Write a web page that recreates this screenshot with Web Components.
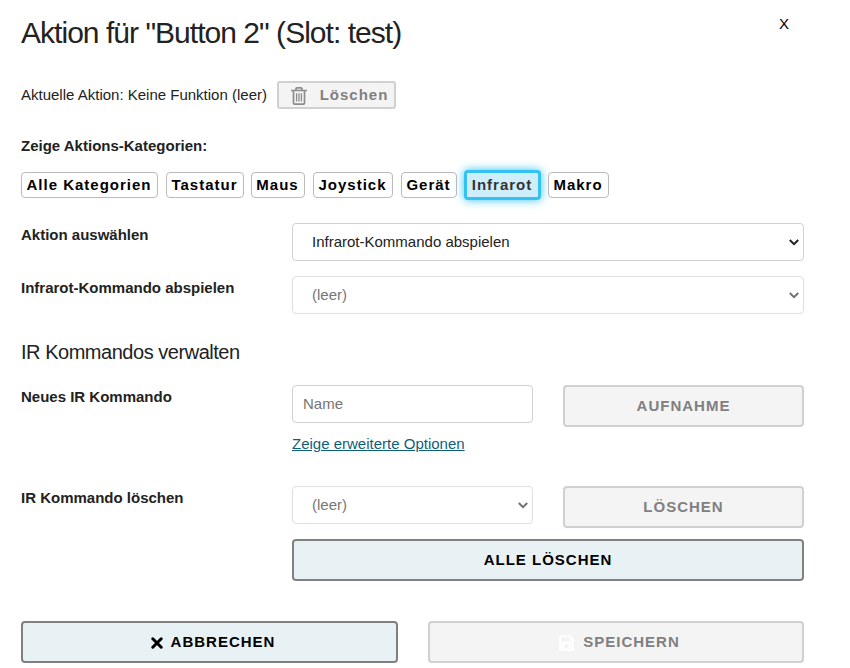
<!DOCTYPE html>
<html lang="de">
<head>
<meta charset="utf-8">
<title>Aktion bearbeiten</title>
<style>
body{margin:0;background:#fff;color:#222;font:15px/24px "Liberation Sans",Arial,sans-serif}
</style>
</head>
<body>
<action-dialog></action-dialog>
<script>
function define(name, html, setup) {
  const t = document.createElement('template');
  t.innerHTML = html;
  customElements.define(name, class extends HTMLElement {
    constructor() {
      super();
      this.attachShadow({ mode: 'open' }).append(t.content.cloneNode(true));
    }
    connectedCallback() { if (setup) setup(this, this.shadowRoot); }
  });
}

define('ui-button', `<style>
:host{display:block}
button{box-sizing:border-box;width:100%;height:42px;margin:0;padding:0;display:flex;align-items:center;justify-content:center;border:2px solid #808080;border-radius:4px;background:#e8f1f4;color:#000;font:bold 15px/38px "Liberation Sans",Arial,sans-serif;letter-spacing:1px;white-space:pre}
:host([disabled]) button{background:#f4f4f4;border-color:#d0d0d0;color:#808080}
:host([small]) button{height:28px;line-height:24px;border-radius:3px}
</style><button><slot name="icon"></slot><span><slot></slot></span></button>`,
  (host, root) => { root.querySelector('button').disabled = host.hasAttribute('disabled'); });

define('category-chip', `<style>
:host{display:block;width:var(--w)}
button{box-sizing:border-box;width:100%;height:26px;margin:0;padding:0 1px 0 0;border:1px solid #bbb;border-radius:4px;background:#fff;color:#000;font:bold 15px/24px "Liberation Sans",Arial,sans-serif;letter-spacing:1px;display:flex;justify-content:center;white-space:nowrap}
:host([selected]) button{height:30px;border:3px solid #33c2f2;background:#cdeefa;color:#333;box-shadow:0 0 10px #33c2f2}
</style><button><slot></slot></button>`);

define('select-box', `<style>
:host{display:flex;box-sizing:border-box;height:38px;padding:0 4px 0 19px;border:1px solid #d1d1d1;border-radius:4px;align-items:center;justify-content:space-between;background:#fff;line-height:36px}
:host([disabled]){border-color:#dfdfdf;color:#777}
svg{display:block;width:10px;height:7px;fill:none;stroke:#222;stroke-width:2}
:host([disabled]) svg{stroke:#707070}
</style><span><slot></slot></span><svg viewBox="0 0 10 7"><path d="M.8 1 5 5.2 9.2 1"/></svg>`);

define('text-input', `<style>
:host{display:block}
input{box-sizing:border-box;display:block;width:100%;height:38px;margin:0;padding:5px 10px 7px;border:1px solid #d1d1d1;border-radius:4px;background:#fff;font:15px "Liberation Sans",Arial,sans-serif}
input::placeholder{color:#757575;opacity:1}
</style><input>`,
  (host, root) => { root.querySelector('input').placeholder = host.getAttribute('placeholder'); });

define('form-row', `<style>
:host{display:grid;grid-template-columns:271px 512px;align-items:start}
.label{font-weight:bold}
</style><span class="label"><slot name="label"></slot></span><div><slot></slot></div>`);

define('action-dialog', `<style>
:host{display:block;box-sizing:border-box;width:850px;height:668px;padding:15px 46px 0 21px;overflow:hidden}
header{display:flex;justify-content:space-between;height:66px}
h1{margin:0;font-weight:400;font-size:30px;line-height:36px;letter-spacing:-.97px;white-space:nowrap}
.close{margin:-3px 15px 0 0;color:#000}
.current{display:flex;height:28px;line-height:28px;gap:10px}
.current ui-button{width:119px}
.heading{margin-top:25px;font-weight:bold}
.chips{display:flex;align-items:center;height:30px;margin:12px 0 23px}
h2{margin:26px 0 21px;font-weight:400;font-size:20px;line-height:24px;letter-spacing:-.47px}
.pair{display:grid;grid-template-columns:241px 241px;gap:30px;align-items:start}
.create{height:101px}
a{display:block;margin-top:9px;color:#0f5f7c;text-decoration:underline}
.all{margin-top:11px}
footer{display:grid;grid-template-columns:377px 376px;gap:30px;margin-top:40px}
svg{display:block}
.trash{width:16px;height:18px;margin:2px 13px 0 6px}
.cross{width:12px;height:12px;margin:2px 8px 0 7px}
.disk{width:15px;height:16px;margin:2px 9px 0 7px}
</style>
<header><h1>Aktion für "Button 2" (Slot: test)</h1><span class="close">X</span></header>
<div class="current"><span>Aktuelle Aktion: Keine Funktion (leer)</span>
<ui-button small disabled><svg slot="icon" class="trash" viewBox="0 0 16 18" fill="none" stroke="#8c8c8c" stroke-width="1.7"><path d="M0 3.5H16M5 3.2V2Q5 .9 6 .9H10Q11 .9 11 2V3.2M2.5 3.5V16Q2.5 17.1 3.6 17.1H12.4Q13.5 17.1 13.5 16V3.5"/><path stroke-width="1.3" d="M5.6 6.3V14.6M8 6.3V14.6M10.4 6.3V14.6"/></svg>Löschen</ui-button></div>
<div class="heading">Zeige Aktions-Kategorien:</div>
<div class="chips">
<category-chip style="--w:137px">Alle Kategorien</category-chip>
<category-chip style="--w:78px;margin-left:8px">Tastatur</category-chip>
<category-chip style="--w:54px;margin-left:7px">Maus</category-chip>
<category-chip style="--w:80px;margin-left:8px">Joystick</category-chip>
<category-chip style="--w:56px;margin-left:8px">Gerät</category-chip>
<category-chip selected style="--w:77px;margin-left:7px">Infrarot</category-chip>
<category-chip style="--w:61px;margin-left:7px">Makro</category-chip>
</div>
<form-row><span slot="label">Aktion auswählen</span><select-box>Infrarot-Kommando abspielen</select-box></form-row>
<form-row style="margin-top:15px"><span slot="label">Infrarot-Kommando abspielen</span><select-box disabled>(leer)</select-box></form-row>
<h2>IR Kommandos verwalten</h2>
<form-row class="create"><span slot="label">Neues IR Kommando</span><div class="pair"><div><text-input placeholder="Name"></text-input><a>Zeige erweiterte Optionen</a></div><ui-button disabled>AUFNAHME</ui-button></div></form-row>
<form-row><span slot="label">IR Kommando löschen</span><div class="pair"><select-box disabled>(leer)</select-box><ui-button disabled>LÖSCHEN</ui-button></div><ui-button class="all">ALLE LÖSCHEN</ui-button></form-row>
<footer>
<ui-button><svg slot="icon" class="cross" viewBox="0 0 12 12" stroke="#000" stroke-width="3" stroke-linecap="round"><path d="M1.8 1.8 10.2 10.2M10.2 1.8 1.8 10.2"/></svg>ABBRECHEN</ui-button>
<ui-button disabled><svg slot="icon" class="disk" viewBox="0 0 15 16"><path fill="#fdfdfd" fill-rule="evenodd" d="M1.5 0H11.5L15 3.5V14.5Q15 16 13.5 16H1.5Q0 16 0 14.5V1.5Q0 0 1.5 0ZM2.2 2.5V6.5H10.8V2.5ZM7.5 9A2.2 2.2 0 1 0 7.5 13.4 2.2 2.2 0 1 0 7.5 9Z"/></svg>SPEICHERN</ui-button>
</footer>`);
</script>
</body>
</html>
